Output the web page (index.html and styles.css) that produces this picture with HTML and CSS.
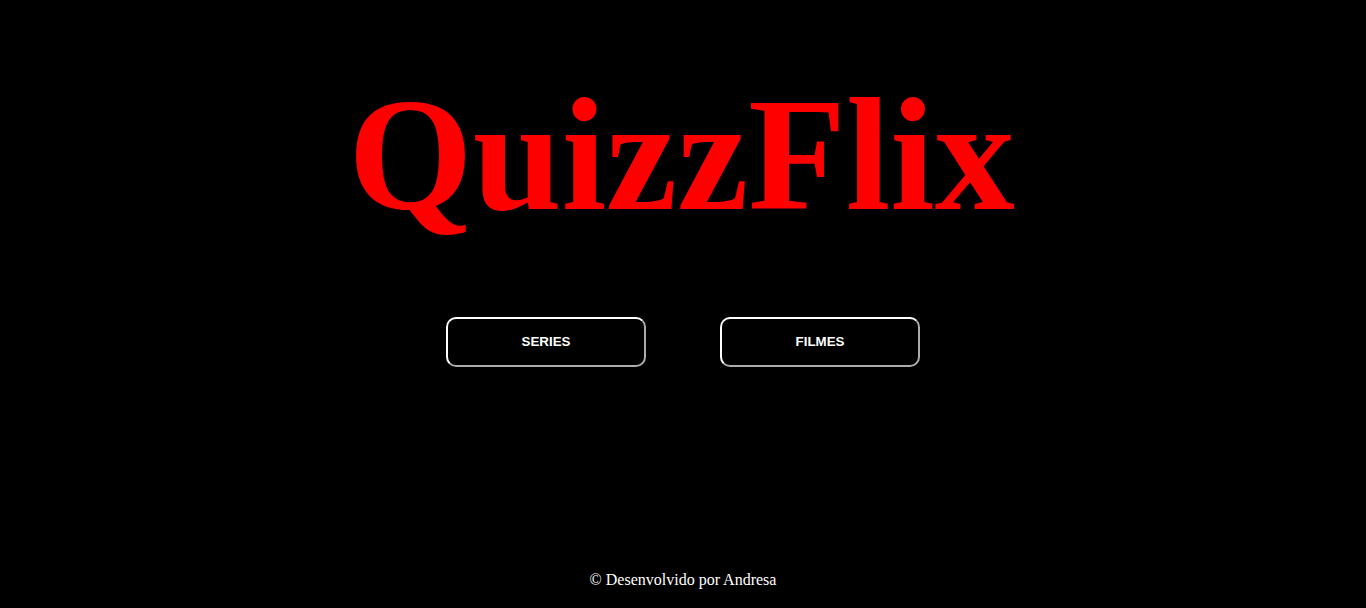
FILE: index.html
```html
<!DOCTYPE html>
<html lang="pt">
<head>
<meta charset="utf-8">
<title>QuizzFlix</title>
<link rel="stylesheet" href="styles.css">
</head>
<body>
<main class="page">
  <h1 class="title">QuizzFlix</h1>
  <div class="choices">
    <button class="choice">SERIES</button>
    <button class="choice">FILMES</button>
  </div>
  <footer class="footer">© Desenvolvido por Andresa</footer>
</main>
</body>
</html>
```
FILE: styles.css
```css
html, body {
  margin: 0;
  padding: 0;
  background: #000;
}
.page {
  height: 608px;
  display: flex;
  flex-direction: column;
  align-items: center;
  box-sizing: border-box;
  padding-top: 75px;
  padding-bottom: 19px;
}
.title {
  margin: 0 0 0 -3px;
  font-family: "Liberation Serif", "Times New Roman", serif;
  font-weight: bold;
  font-size: 160px;
  line-height: 160px;
  color: #ff0000;
}
.choices {
  margin-top: 82px;
  display: flex;
  gap: 74px;
}
.choice {
  width: 200px;
  height: 50px;
  box-sizing: border-box;
  background: #000;
  color: #fff;
  border: 2px outset #fff;
  border-radius: 10px;
  font-family: "Liberation Sans", Arial, sans-serif;
  font-weight: bold;
  font-size: 13.333px;
  padding: 0 0 2px 0;
  cursor: pointer;
}
.footer {
  margin-top: auto;
  font-family: "Liberation Serif", "Times New Roman", serif;
  font-size: 16px;
  line-height: 18px;
  color: #fff;
}
```
